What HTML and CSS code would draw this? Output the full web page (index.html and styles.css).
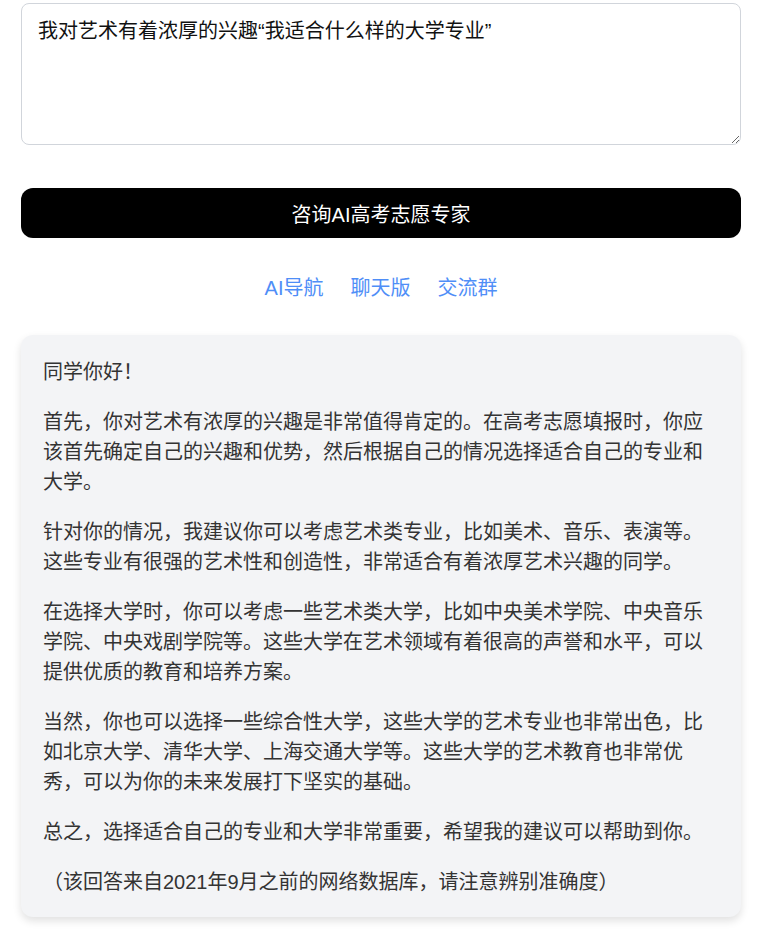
FILE: index.html
```html
<!DOCTYPE html>
<html lang="zh-CN">
<head>
  <meta charset="UTF-8">
  <title>AI高考志愿专家</title>
  <link rel="stylesheet" href="styles.css">
</head>
<body>
  <div class="page">
    <textarea class="question">我对艺术有着浓厚的兴趣“我适合什么样的大学专业”</textarea>

    <button class="ask">咨询AI高考志愿专家</button>

    <div class="links">
      <a href="#">AI导航</a>
      <a href="#">聊天版</a>
      <a href="#">交流群</a>
    </div>

    <div class="answer">
      <p>同学你好！</p>
      <p>首先，你对艺术有浓厚的兴趣是非常值得肯定的。在高考志愿填报时，你应该首先确定自己的兴趣和优势，然后根据自己的情况选择适合自己的专业和大学。</p>
      <p>针对你的情况，我建议你可以考虑艺术类专业，比如美术、音乐、表演等。这些专业有很强的艺术性和创造性，非常适合有着浓厚艺术兴趣的同学。</p>
      <p>在选择大学时，你可以考虑一些艺术类大学，比如中央美术学院、中央音乐学院、中央戏剧学院等。这些大学在艺术领域有着很高的声誉和水平，可以提供优质的教育和培养方案。</p>
      <p>当然，你也可以选择一些综合性大学，这些大学的艺术专业也非常出色，比如北京大学、清华大学、上海交通大学等。这些大学的艺术教育也非常优秀，可以为你的未来发展打下坚实的基础。</p>
      <p>总之，选择适合自己的专业和大学非常重要，希望我的建议可以帮助到你。</p>
      <p>（该回答来自2021年9月之前的网络数据库，请注意辨别准确度）</p>
    </div>
  </div>
</body>
</html>
```

FILE: styles.css
```css
body {
  margin: 0;
  background-color: #fff;
  font-family: "Liberation Sans", "Noto Sans CJK SC", sans-serif;
}
.page {
  width: 720px;
  padding: 3px 0 20px 21px;
}
.question {
  display: block;
  box-sizing: border-box;
  width: 720px;
  height: 142px;
  padding: 12px 16px;
  border: 1px solid #d1d5db;
  border-radius: 8px;
  font-family: "Liberation Sans", "Noto Sans CJK SC", sans-serif;
  font-size: 20px;
  line-height: 30px;
  color: #111;
  resize: vertical;
}
.ask {
  display: block;
  width: 720px;
  height: 50px;
  margin-top: 43px;
  border: none;
  border-radius: 12px;
  background-color: #000;
  color: #fff;
  font-family: "Liberation Sans", "Noto Sans CJK SC", sans-serif;
  font-size: 20px;
  cursor: pointer;
}
.links {
  display: flex;
  justify-content: center;
  gap: 27px;
  margin-top: 35px;
  line-height: 30px;
}
.links a {
  color: #4f8ef7;
  font-size: 20px;
  text-decoration: none;
}
.answer {
  margin-top: 32px;
  padding: 22px 22px 20px;
  background-color: #f3f4f6;
  border-radius: 12px;
  box-shadow: 0 4px 8px rgba(0, 0, 0, 0.12);
  color: #333;
  font-size: 20px;
  line-height: 30px;
}
.answer p {
  margin: 0 0 20px;
}
.answer p:last-child {
  margin-bottom: 0;
}
```
